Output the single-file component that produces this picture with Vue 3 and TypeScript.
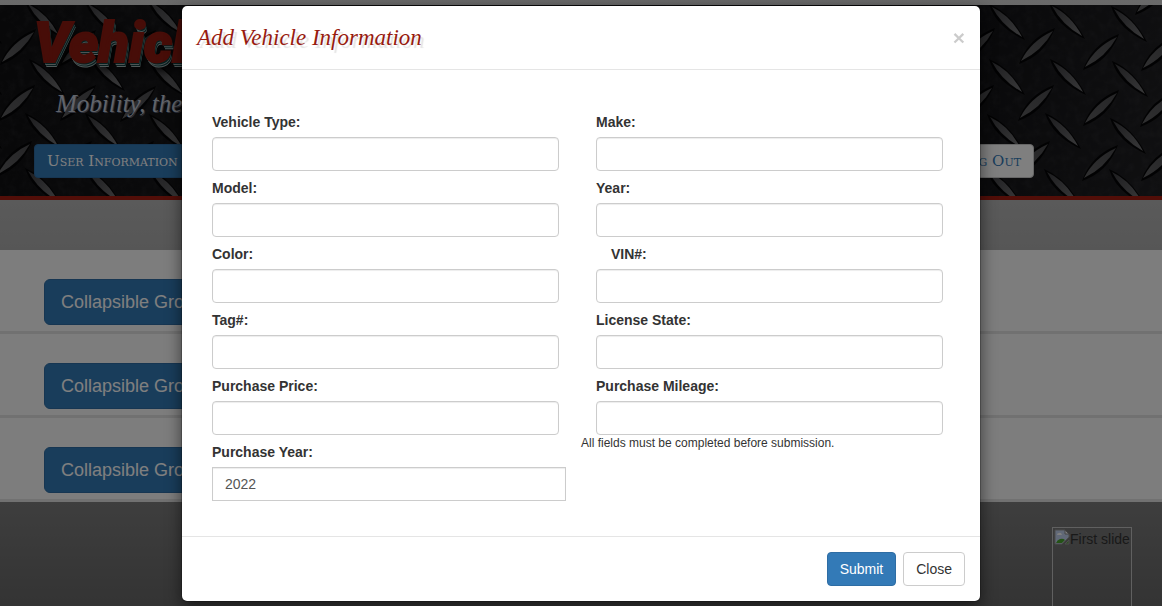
<script setup lang="ts">
import { ref } from 'vue'

interface Field {
  id: string
  label: string
  indent?: boolean
  full?: boolean
}

const leftFields: Field[] = [
  { id: 'type', label: 'Vehicle Type:' },
  { id: 'model', label: 'Model:' },
  { id: 'color', label: 'Color:' },
  { id: 'tag', label: 'Tag#:' },
  { id: 'price', label: 'Purchase Price:' },
  { id: 'pyear', label: 'Purchase Year:', full: true },
]
const rightFields: Field[] = [
  { id: 'make', label: 'Make:' },
  { id: 'year', label: 'Year:' },
  { id: 'vin', label: 'VIN#:', indent: true },
  { id: 'state', label: 'License State:' },
  { id: 'mileage', label: 'Purchase Mileage:' },
]
const values = ref<Record<string, string>>({ pyear: '2022' })

// Raised treads of the diamond plate, as centre points
const falling: number[][] = [
  [-16, 26], [43, 19], [103, 19], [165, 17], [-16, 77], [47, 77], [107, 73], [167, 78],
  [-16, 131], [43, 131], [103, 131], [167, 132], [-16, 187], [43, 186], [103, 186], [167, 187],
  [1007, 22], [1067, 21], [1129, 24], [1007, 77], [1068, 77], [1130, 79],
  [1005, 132], [1063, 131], [1128, 136], [1004, 187], [1062, 187], [1127, 187],
]
const rising: number[][] = [
  [18, 47], [78, 48], [138, 48], [17, 103], [78, 103], [138, 104], [14, 159], [74, 159], [136, 159],
  [977, 46], [1037, 46], [1101, 52], [1159, 53], [976, 103], [1036, 103], [1101, 108], [1158, 109],
  [1032, 159], [1100, 163], [1159, 163], [1153, -3],
]
</script>

<template>
  <div class="page">
    <header class="banner">
      <svg class="plate" aria-hidden="true">
        <defs>
          <linearGradient id="tread" x1="0" y1="0" x2="1" y2="1">
            <stop offset="0" stop-color="#3c3c40" />
            <stop offset="1" stop-color="#727274" />
          </linearGradient>
          <linearGradient id="tread-dim" x1="1" y1="0" x2="0" y2="1">
            <stop offset="0" stop-color="#4c4c4f" />
            <stop offset="1" stop-color="#606062" />
          </linearGradient>
          <filter id="grain" x="0" y="0" width="100%" height="100%">
            <feTurbulence type="fractalNoise" baseFrequency="0.12" numOctaves="4" seed="4" />
            <feColorMatrix values="0 0 0 0 .4  0 0 0 0 .4  0 0 0 0 .43  .9 0 0 0 -.38" />
          </filter>
        </defs>
        <rect width="100%" height="100%" filter="url(#grain)" opacity=".15" />
        <g v-for="(p, i) in falling" :key="'f' + i" :transform="`translate(${p[0]} ${p[1] - 5})`">
          <path d="M-18-18Q4-9 18 18Q-11 5-18-18Z" fill="#050506" />
          <path d="M-15-15Q4-6 15 15Q-5 4-15-15Z" fill="url(#tread)" />
        </g>
        <g v-for="(p, i) in rising" :key="'r' + i" :transform="`translate(${p[0]} ${p[1] - 5})`">
          <path d="M18-18Q-9-8-18 18Q8 9 18-18Z" fill="#050506" />
          <path d="M16-15Q-6-5-16 15Q5 5 16-15Z" fill="url(#tread-dim)" />
        </g>
      </svg>
      <div class="banner-content">
        <h1>Vehicle</h1>
        <p class="tagline">Mobility, the</p>
        <nav>
          <button type="button" class="nav-button active">User Information</button>
          <button type="button" class="nav-button">Log Out</button>
        </nav>
      </div>
    </header>

    <main>
      <section v-for="n in 3" :key="n" class="panel">
        <button type="button" class="group-button">Collapsible Group</button>
      </section>
    </main>

    <footer class="slides">
      <div class="slide">
        <svg width="16" height="16" viewBox="0 0 16 16" aria-hidden="true">
          <path d="M1 1H11L15 5V8L8 15H1Z" fill="#c3d3f1" stroke="#999" />
          <path d="M11 1V5H15Z" fill="#fff" stroke="#888" />
          <path d="M3 6Q3 4 5 4Q7 3 8 6Z" fill="#fff" />
          <path d="M2 14Q3 11 6 10Q9 9 11 11L8 14Z" fill="#4aa52e" />
          <path d="M11 15L15 11V15Z" fill="#5c9c47" stroke="#999" />
        </svg><span>First slide</span>
      </div>
    </footer>

    <div class="backdrop">
      <form class="modal" role="dialog" aria-labelledby="dialog-title" @submit.prevent>
        <div class="modal-header">
          <h2 id="dialog-title">Add Vehicle Information</h2>
          <button type="button" class="dismiss" aria-label="Dismiss">×</button>
        </div>
        <div class="modal-body">
          <div class="column">
            <div v-for="f in leftFields" :key="f.id" class="field" :class="{ full: f.full }">
              <label :for="f.id">{{ f.label }}</label>
              <input :id="f.id" v-model="values[f.id]" type="text" />
            </div>
          </div>
          <div class="column">
            <div v-for="f in rightFields" :key="f.id" class="field" :class="{ indent: f.indent }">
              <label :for="f.id">{{ f.label }}</label>
              <input :id="f.id" v-model="values[f.id]" type="text" />
            </div>
            <p class="note">All fields must be completed before submission.</p>
          </div>
        </div>
        <div class="modal-footer">
          <button type="submit" class="button primary">Submit</button>
          <button type="button" class="button">Close</button>
        </div>
      </form>
    </div>
  </div>
</template>

<style>
body {
  margin: 0;
}
</style>

<style scoped>
* {
  box-sizing: border-box;
}
.page {
  position: relative;
  display: flex;
  flex-direction: column;
  height: 100vh;
  padding-top: 5px;
  overflow: hidden;
  background: linear-gradient(#d4d4d4, #acacac 42%, #7c7c7c 83%, #686868);
  color: #333;
  font: 14px/20px "Liberation Sans", Arial, sans-serif;
}
button,
input {
  font: inherit;
}
h1,
h2,
p {
  margin: 0;
}
.banner {
  position: relative;
  flex: none;
  height: 195px;
  overflow: hidden;
  background: linear-gradient(100deg, #101012, #18181b 30%, #111114 80%, #202023);
  border-bottom: 4px solid #a51d10;
}
.plate {
  position: absolute;
  inset: 0;
  width: 100%;
  height: 100%;
}
.banner-content {
  position: relative;
  padding: 8px 34px 0;
}
h1 {
  color: #8f1a10;
  font: italic 900 56px/60px Roboto, "Liberation Sans", sans-serif;
  -webkit-text-stroke: 2px #8f1a10;
  text-shadow: 1px 2px 0 #0a4040, 1px 3px 0 #9aaaaa, 2px 4px 0 #123c3c, 2px 5px 0 #a0b0b0, 5px 8px 8px #000;
}
.tagline {
  padding-left: 22px;
  margin-top: 16px;
  color: #c3c8d4;
  font: italic 25px/30px "Liberation Serif", serif;
  text-shadow: 1px 1px 0 #555b70;
}
nav {
  display: flex;
  justify-content: space-between;
  max-width: 1000px;
  margin-top: 25px;
}
.nav-button {
  height: 34px;
  padding: 0 12px;
  border: 1px solid #ccc;
  border-radius: 4px;
  background: #fff;
  color: #337ab7;
  font: small-caps 15px/20px "DejaVu Serif", serif;
}
.nav-button.active {
  border-color: #2e6da4;
  background: #337ab7;
  color: #fff;
}
main {
  flex: none;
  margin-top: 50px;
}
.panel {
  height: 84px;
  padding: 29px 44px 0;
  border-bottom: 3px solid #e2e2e2;
  background: #fbfbfb;
}
.group-button {
  height: 46px;
  padding: 0 16px;
  border: 1px solid #2e6da4;
  border-radius: 6px;
  background: #337ab7;
  color: #fff;
  font-size: 18px;
  line-height: 24px;
}
.slides {
  display: flex;
  flex: 1;
  justify-content: flex-end;
  padding: 25px 30px 0;
}
.slide {
  display: flex;
  align-items: flex-start;
  width: 80px;
  padding: 1px 0 0 1px;
  border: 1px solid #c0c0c0;
  border-bottom: 0;
  white-space: nowrap;
}
.slide svg {
  flex: none;
}
.backdrop {
  position: absolute;
  inset: 0;
  padding: 5px 0;
  background: rgba(0, 0, 0, 0.5);
}
.modal {
  width: 800px;
  max-width: 100%;
  margin: 0 auto;
  border: 1px solid rgba(0, 0, 0, 0.2);
  border-radius: 6px;
  background: #fff;
  background-clip: padding-box;
  box-shadow: 0 5px 15px rgba(0, 0, 0, 0.5);
}
.modal-header {
  display: flex;
  align-items: center;
  justify-content: space-between;
  height: 64px;
  padding: 0 15px;
  border-bottom: 1px solid #e5e5e5;
}
h2 {
  color: #981b10;
  font: italic 23px/30px "Liberation Serif", serif;
  text-shadow: 3px 3px 1px #e4e4e4;
}
.dismiss {
  padding: 0;
  border: 0;
  background: none;
  color: #000;
  font-size: 21px;
  font-weight: bold;
  line-height: 21px;
  opacity: 0.2;
}
.modal-body {
  display: grid;
  grid-template-columns: 1fr 1fr;
  padding: 42px 15px 35px;
}
.column {
  display: flex;
  flex-direction: column;
  gap: 7px;
}
.field {
  display: flex;
  flex-direction: column;
  gap: 5px;
  padding: 0 22px 0 15px;
}
.field.full {
  padding-right: 15px;
}
label {
  font-weight: bold;
}
.indent label {
  padding-left: 15px;
}
.field input {
  width: 100%;
  height: 34px;
  padding: 6px 12px;
  border: 1px solid #ccc;
  border-radius: 4px;
  background: #fff;
  box-shadow: inset 0 1px 1px rgba(0, 0, 0, 0.075);
  color: #555;
}
.field.full input {
  border-radius: 0;
}
.note {
  margin-top: -7px;
  font-size: 12px;
  line-height: 17px;
}
.modal-footer {
  display: flex;
  justify-content: flex-end;
  gap: 7px;
  padding: 15px;
  border-top: 1px solid #e5e5e5;
}
.button {
  height: 34px;
  padding: 0 12px;
  border: 1px solid #ccc;
  border-radius: 4px;
  background: #fff;
  color: #333;
}
.button.primary {
  border-color: #2e6da4;
  background: #337ab7;
  color: #fff;
}
</style>
